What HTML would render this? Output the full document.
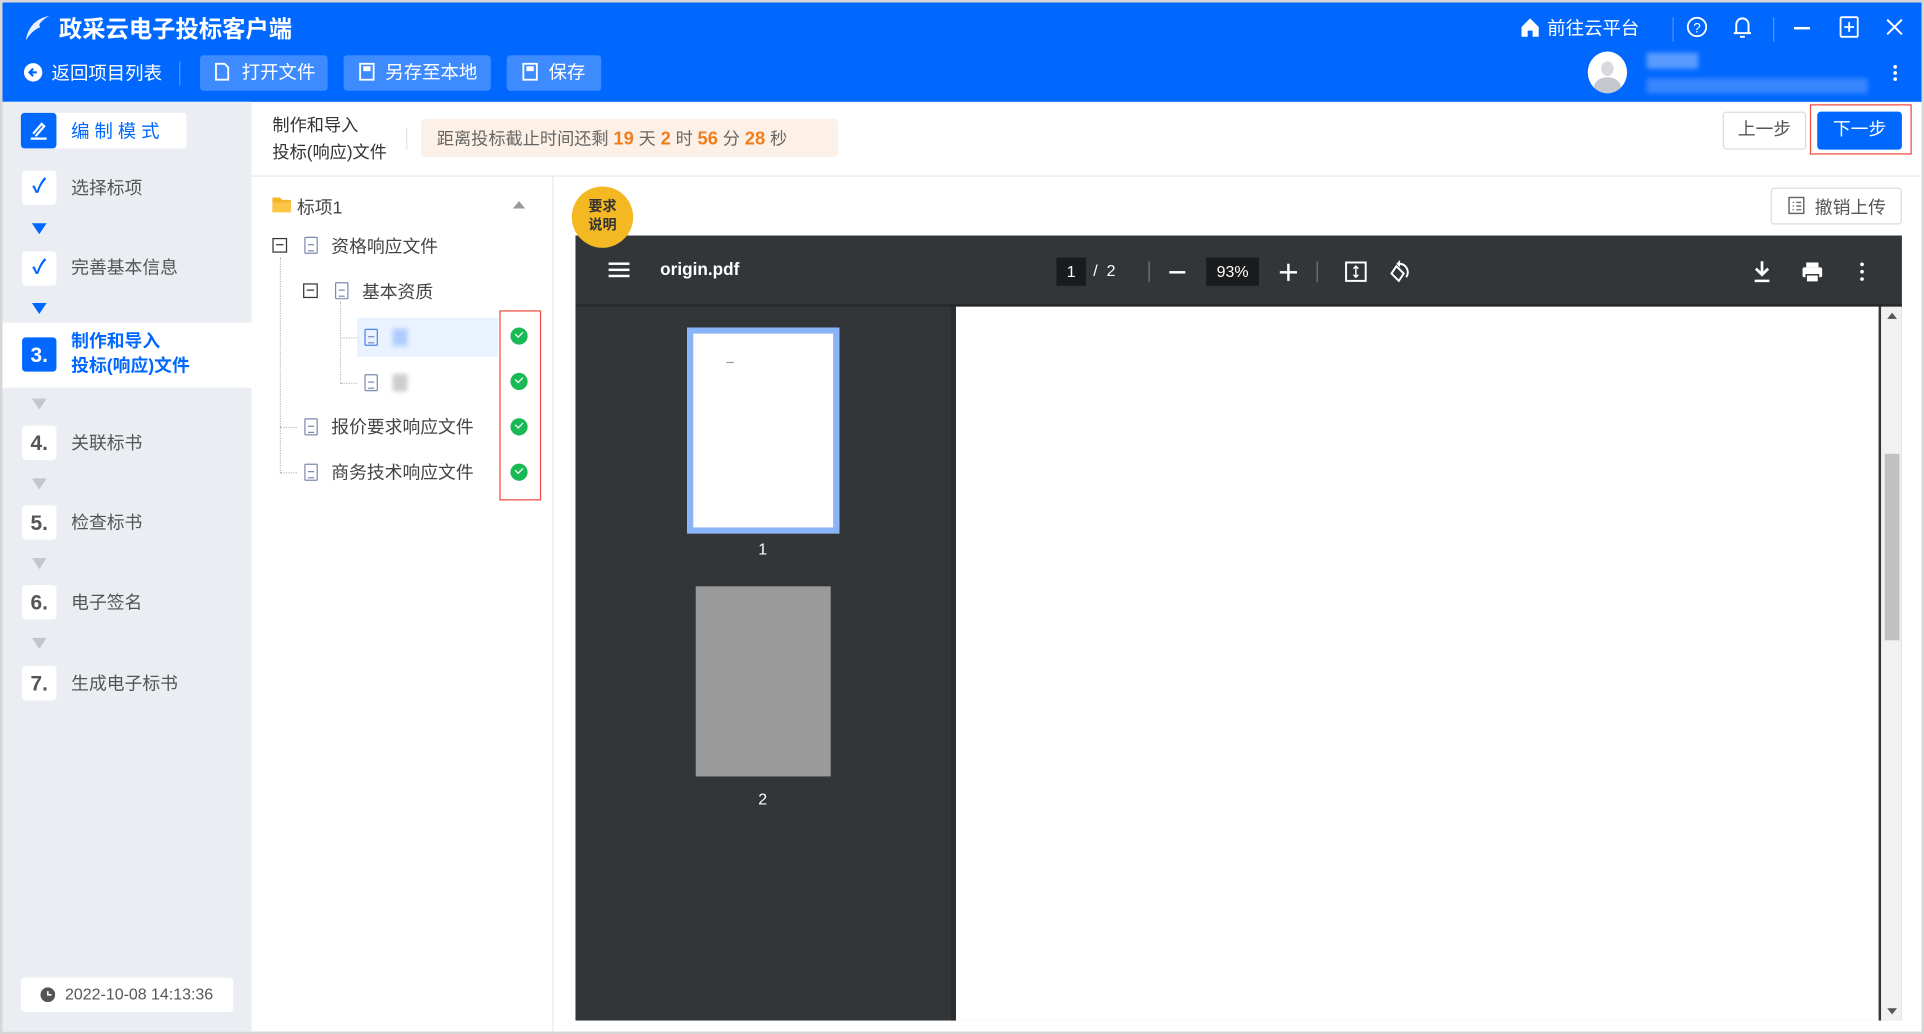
<!DOCTYPE html>
<html><head><meta charset="utf-8"><style>
*{box-sizing:border-box;margin:0;padding:0}
html,body{width:1924px;height:1034px;overflow:hidden;background:#dcdcdc}
#w{position:absolute;left:0;top:0;width:1568px;height:843px;transform:scale(1.22704,1.2266);transform-origin:0 0;font-family:"Liberation Sans","Noto Sans CJK SC",sans-serif;background:#fff;border:2px solid #d6d6d6;overflow:hidden}
.a{position:absolute}
.t{position:absolute;white-space:nowrap}
.btn{position:absolute;top:43px;height:29px;background:#3d8bff;border-radius:3px;color:#fff;font-size:15px;line-height:29px;padding-left:34px}
.sq{position:absolute;left:16px;width:28px;height:28px;background:#fff;border-radius:3px;font-weight:bold;font-size:16px;color:#555;text-align:center;line-height:28px}
.st{position:absolute;left:56px;font-size:14.5px;color:#555}
.arr{position:absolute;left:24px;width:0;height:0;border-left:6px solid transparent;border-right:6px solid transparent;border-top:9px solid #c4c6cc}
.ck{position:absolute;left:414px;width:14px;height:14px;border-radius:50%;background:#19b955}
.ck:after{content:"";position:absolute;left:4px;top:3px;width:5px;height:3px;border-left:1.6px solid #fff;border-bottom:1.6px solid #fff;transform:rotate(-45deg)}
.tr{position:absolute;font-size:14.5px;color:#444}
.doc{position:absolute;width:11px;height:14px;border:1.3px solid #7d8ab0;border-radius:1px}
.doc:after{content:"";position:absolute;left:2px;top:5px;width:5px;height:4px;border-top:1.3px solid #7d8ab0;border-bottom:1.3px solid #7d8ab0}
.mb{position:absolute;width:12px;height:12px;border:1.3px solid #333}
.mb:after{content:"";position:absolute;left:2px;top:4px;width:6px;border-top:1.3px solid #333}
</style></head><body><div id="w">
<div class="a" style="left:0;top:0;width:1566px;height:81px;background:#0068ff"></div>
<svg class="a" style="left:16px;top:10px" width="24" height="24" viewBox="0 0 24 24"><path d="M22 1C12 3 5 9 3 21c3-5 7-9 12-11C12 8 17 4 22 1z" fill="#e8f0ff"/></svg>
<div class="t" style="left:46px;top:7px;color:#fff;font-size:19px;font-weight:bold">政采云电子投标客户端</div>
<svg class="a" style="left:17px;top:49px" width="16" height="16" viewBox="0 0 16 16"><circle cx="8" cy="8" r="7.5" fill="#fff"/><path d="M11 8H5.5M8 5L5 8l3 3" stroke="#0068ff" stroke-width="1.8" fill="none"/></svg>
<div class="t" style="left:40px;top:47px;color:#fff;font-size:15px">返回项目列表</div>
<div class="a" style="left:144px;top:48px;width:1px;height:20px;background:#4d93ff"></div>
<div class="btn" style="left:161px;width:104px">打开文件</div>
<div class="btn" style="left:278px;width:120px">另存至本地</div>
<div class="btn" style="left:411px;width:77px">保存</div>
<svg class="a" style="left:172px;top:49px" width="14" height="16"><path d="M2 1h7l3 3v10H2z" stroke="#fff" stroke-width="1.5" fill="none"/></svg>
<svg class="a" style="left:290px;top:49px" width="14" height="16"><rect x="1.5" y="1" width="11" height="13" stroke="#fff" stroke-width="1.5" fill="none"/><rect x="4" y="3" width="6" height="4" fill="#fff"/></svg>
<svg class="a" style="left:423px;top:49px" width="14" height="16"><rect x="1.5" y="1" width="11" height="13" stroke="#fff" stroke-width="1.5" fill="none"/><rect x="4" y="3" width="6" height="4" fill="#fff"/></svg>
<svg class="a" style="left:1236px;top:11px" width="18" height="18"><path d="M2 9L9 2l7 7v8h-5v-5H7v5H2z" fill="#fff"/></svg>
<div class="t" style="left:1259px;top:10px;color:#fff;font-size:15px">前往云平台</div>
<div class="a" style="left:1361px;top:12px;width:1px;height:20px;background:#4d93ff"></div>
<svg class="a" style="left:1372px;top:11px" width="18" height="18"><circle cx="9" cy="9" r="7.5" stroke="#fff" stroke-width="1.5" fill="none"/><text x="9" y="13.5" font-size="11" fill="#fff" text-anchor="middle" font-family="Liberation Sans">?</text></svg>
<svg class="a" style="left:1410px;top:10px" width="16" height="20"><path d="M3 15V8a5 5 0 0110 0v7zM1 15h14M6 18h4" stroke="#fff" stroke-width="1.6" fill="none"/></svg>
<div class="a" style="left:1443px;top:12px;width:1px;height:20px;background:#4d93ff"></div>
<div class="a" style="left:1460px;top:20px;width:13px;height:1.6px;background:#fff"></div>
<svg class="a" style="left:1497px;top:11px" width="16" height="18"><rect x="1" y="1" width="14" height="16" stroke="#fff" stroke-width="1.5" fill="none" rx="1"/><path d="M8 5v8M4 9h8" stroke="#fff" stroke-width="1.5"/></svg>
<svg class="a" style="left:1534px;top:12px" width="16" height="16"><path d="M2 2l12 12M14 2L2 14" stroke="#fff" stroke-width="1.6"/></svg>
<div class="a" style="left:1292px;top:40px;width:32px;height:34px;border-radius:50%;background:#fff;overflow:hidden"><div class="a" style="left:11px;top:8px;width:10px;height:12px;border-radius:50%;background:#d7d9dd"></div><div class="a" style="left:5px;top:21px;width:22px;height:16px;border-radius:50% 50% 0 0;background:#c5c8ce"></div></div>
<div class="a" style="left:1340px;top:41px;width:42px;height:13px;background:#5a9bff;filter:blur(2px)"></div>
<div class="a" style="left:1340px;top:62px;width:180px;height:12px;background:#3a86ff;filter:blur(2px)"></div>
<div class="a" style="left:1541px;top:51px;width:3px;height:3px;background:#fff;border-radius:50%;box-shadow:0 5px #fff,0 10px #fff"></div>
<div class="a" style="left:0;top:81px;width:203px;height:760px;background:#eaedf2"></div>
<div class="a" style="left:15px;top:90px;width:135px;height:29px;background:#fff;border-radius:3px"></div>
<div class="a" style="left:15px;top:90px;width:29px;height:29px;background:#0068ff;border-radius:3px"></div>
<svg class="a" style="left:21px;top:96px" width="17" height="17"><path d="M4 11L11 3l2 2-7 8M2 15h13" stroke="#fff" stroke-width="1.8" fill="none"/></svg>
<div class="t" style="left:56px;top:94px;color:#0068ff;font-size:15px;letter-spacing:4px">编制模式</div>
<div class="sq" style="top:137px;color:#0068ff">✓</div><div class="st" style="top:140px">选择标项</div>
<div class="arr" style="top:180px;border-top-color:#0068ff"></div>
<div class="sq" style="top:203px;color:#0068ff">✓</div><div class="st" style="top:205px">完善基本信息</div>
<div class="arr" style="top:245px;border-top-color:#0068ff"></div>
<div class="a" style="left:0;top:261px;width:203px;height:53px;background:#fff"></div>
<div class="sq" style="top:273px;background:#0068ff;color:#fff;font-size:17px;line-height:30px">3.</div>
<div class="st" style="top:267px;color:#0068ff;font-weight:bold;line-height:20px">制作和导入<br>投标(响应)文件</div>
<div class="arr" style="top:323px"></div>
<div class="sq" style="top:345px;font-size:17px;line-height:30px">4.</div><div class="st" style="top:348px">关联标书</div>
<div class="arr" style="top:388px"></div>
<div class="sq" style="top:410px;font-size:17px;line-height:30px">5.</div><div class="st" style="top:413px">检查标书</div>
<div class="arr" style="top:453px"></div>
<div class="sq" style="top:475px;font-size:17px;line-height:30px">6.</div><div class="st" style="top:478px">电子签名</div>
<div class="arr" style="top:518px"></div>
<div class="sq" style="top:541px;font-size:17px;line-height:30px">7.</div><div class="st" style="top:544px">生成电子标书</div>
<div class="a" style="left:15px;top:795px;width:173px;height:28px;background:#fff;border-radius:3px"></div>
<svg class="a" style="left:31px;top:803px" width="12" height="12"><circle cx="6" cy="6" r="6" fill="#555"/><path d="M6 3v3h3" stroke="#fff" stroke-width="1.3" fill="none"/></svg>
<div class="t" style="left:51px;top:801px;font-size:13px;color:#555">2022-10-08 14:13:36</div>
<div class="t" style="left:220px;top:89px;font-size:14px;color:#333;line-height:22px">制作和导入<br>投标(响应)文件</div>
<div class="a" style="left:329px;top:102px;width:1px;height:18px;background:#e5e5e5"></div>
<div class="a" style="left:341px;top:95px;width:340px;height:31px;background:#fdf1e7;border-radius:3px"></div>
<div class="t" style="left:354px;top:101px;font-size:14px;color:#666">距离投标截止时间还剩 <b style="color:#f07e1f;font-size:15px">19</b> 天 <b style="color:#f07e1f;font-size:15px">2</b> 时 <b style="color:#f07e1f;font-size:15px">56</b> 分 <b style="color:#f07e1f;font-size:15px">28</b> 秒</div>
<div class="a" style="left:1402px;top:89px;width:68px;height:31px;border:1px solid #dcdcdc;border-radius:3px;font-size:14.5px;color:#555;text-align:center;line-height:29px">上一步</div>
<div class="a" style="left:1479px;top:89px;width:69px;height:31px;background:#0068ff;border-radius:3px;font-size:14.5px;color:#fff;text-align:center;line-height:31px">下一步</div>
<div class="a" style="left:1473px;top:83px;width:83px;height:41px;border:1.5px solid #ef4a3f"></div>
<div class="a" style="left:203px;top:141px;width:1363px;height:1px;background:#e8e8e8"></div>
<div class="a" style="left:448px;top:142px;width:1px;height:699px;background:#e8e8e8"></div>
<svg class="a" style="left:219px;top:157px" width="17" height="15"><path d="M1 2h6l2 2h7v10H1z" fill="#f5b428"/><path d="M1 6h15v8H1z" fill="#fbc545"/></svg>
<div class="tr" style="left:240px;top:156px">标项1</div>
<div class="a" style="left:416px;top:162px;border-left:5px solid transparent;border-right:5px solid transparent;border-bottom:6px solid #999"></div>
<div class="mb" style="left:220px;top:192px"></div><div class="doc" style="left:246px;top:191px"></div><div class="tr" style="left:268px;top:188px">资格响应文件</div>
<div class="a" style="left:226px;top:208px;height:176px;border-left:1px dotted #bbb"></div>
<div class="mb" style="left:245px;top:229px"></div><div class="doc" style="left:271px;top:228px"></div><div class="tr" style="left:293px;top:225px">基本资质</div>
<div class="a" style="left:275px;top:244px;height:64px;border-left:1px dotted #bbb"></div>
<div class="a" style="left:289px;top:257px;width:115px;height:32px;background:#eaf2ff"></div>
<div class="a" style="left:275px;top:273px;width:14px;border-top:1px dotted #bbb"></div>
<div class="a" style="left:275px;top:310px;width:14px;border-top:1px dotted #bbb"></div>
<div class="doc" style="left:295px;top:266px;border-color:#4a86f0"></div><div class="a" style="left:318px;top:266px;width:12px;height:14px;background:#aecbff;filter:blur(2px)"></div>
<div class="doc" style="left:295px;top:303px"></div><div class="a" style="left:318px;top:303px;width:12px;height:14px;background:#ccc;filter:blur(2px)"></div>
<div class="a" style="left:226px;top:346px;width:14px;border-top:1px dotted #bbb"></div>
<div class="a" style="left:226px;top:383px;width:14px;border-top:1px dotted #bbb"></div>
<div class="doc" style="left:246px;top:339px"></div><div class="tr" style="left:268px;top:335px">报价要求响应文件</div>
<div class="doc" style="left:246px;top:376px"></div><div class="tr" style="left:268px;top:372px">商务技术响应文件</div>
<div class="ck" style="top:265px"></div><div class="ck" style="top:302px"></div><div class="ck" style="top:339px"></div><div class="ck" style="top:376px"></div>
<div class="a" style="left:405px;top:251px;width:34px;height:155px;border:1.5px solid #ef4a3f"></div>
<div class="a" style="left:1441px;top:151px;width:107px;height:30px;border:1px solid #dcdcdc;border-radius:3px"></div>
<svg class="a" style="left:1455px;top:158px" width="14" height="15"><rect x="1" y="1" width="12" height="13" stroke="#666" stroke-width="1.2" fill="none"/><path d="M4 5h1M7 5h4M4 8h1M7 8h4M4 11h1M7 11h4" stroke="#666" stroke-width="1.1"/></svg>
<div class="t" style="left:1477px;top:156px;font-size:14.5px;color:#555">撤销上传</div>
<div class="a" style="left:467px;top:190px;width:1081px;height:640px;background:#323639"></div>
<div class="a" style="left:467px;top:246px;width:1081px;height:2px;background:#26292b"></div>
<div class="a" style="left:777px;top:248px;width:752px;height:582px;background:#fff"></div>
<div class="a" style="left:773px;top:248px;width:4px;height:582px;background:#2a2d30"></div>
<div class="a" style="left:1531px;top:248px;width:17px;height:582px;background:#f1f1f1"></div>
<div class="a" style="left:1534px;top:368px;width:12px;height:152px;background:#c1c1c1"></div>
<div class="a" style="left:1536px;top:253px;border-left:4px solid transparent;border-right:4px solid transparent;border-bottom:5px solid #555"></div>
<div class="a" style="left:1536px;top:820px;border-left:4px solid transparent;border-right:4px solid transparent;border-top:5px solid #555"></div>
<div class="a" style="left:464px;top:150px;width:50px;height:50px;border-radius:50%;background:#f4b823;color:#333;font-size:11.5px;text-align:center;line-height:15px;padding-top:10px;font-weight:bold">要求<br>说明</div>
<div class="a" style="left:494px;top:212px;width:17px;height:2px;background:#fff;box-shadow:0 5px #fff,0 10px #fff"></div>
<div class="t" style="left:536px;top:209px;color:#fff;font-size:14px;font-weight:bold">origin.pdf</div>
<div class="a" style="left:859px;top:208px;width:24px;height:23px;background:#191b1c;color:#fff;font-size:13px;text-align:center;line-height:23px">1</div>
<div class="t" style="left:889px;top:211px;color:#fff;font-size:13px">/ &nbsp;2</div>
<div class="a" style="left:934px;top:211px;width:1px;height:17px;background:#777"></div>
<div class="a" style="left:951px;top:219px;width:13px;height:2px;background:#fff"></div>
<div class="a" style="left:981px;top:208px;width:43px;height:23px;background:#191b1c;color:#fff;font-size:13px;text-align:center;line-height:23px">93%</div>
<div class="a" style="left:1041px;top:219px;width:14px;height:2px;background:#fff"></div>
<div class="a" style="left:1047px;top:213px;width:2px;height:14px;background:#fff"></div>
<div class="a" style="left:1071px;top:211px;width:1px;height:17px;background:#777"></div>
<svg class="a" style="left:1093px;top:210px" width="20" height="20"><rect x="2" y="2" width="16" height="15" stroke="#fff" stroke-width="1.6" fill="none"/><path d="M10 5v9M8 7l2-2 2 2M8 12l2 2 2-2" stroke="#fff" stroke-width="1.2" fill="none"/></svg>
<svg class="a" style="left:1130px;top:209px" width="20" height="22"><path d="M6 6l-4 6 6 6 4-6z" stroke="#fff" stroke-width="1.6" fill="none"/><path d="M9 4a7 7 0 015 11" stroke="#fff" stroke-width="1.6" fill="none"/><path d="M9 1v6l-3-3z" fill="#fff"/></svg>
<svg class="a" style="left:1425px;top:210px" width="18" height="20"><path d="M9 1v11M4 7l5 5 5-5" stroke="#fff" stroke-width="2.2" fill="none"/><path d="M3 17h12" stroke="#fff" stroke-width="2"/></svg>
<svg class="a" style="left:1465px;top:210px" width="20" height="20"><rect x="5" y="2" width="10" height="4" fill="#fff"/><rect x="2" y="6" width="16" height="8" rx="1.5" fill="#fff"/><rect x="5" y="12" width="10" height="6" fill="#fff" stroke="#323639" stroke-width="1.2"/></svg>
<div class="a" style="left:1514px;top:212px;width:3px;height:3px;background:#fff;border-radius:50%;box-shadow:0 6px #fff,0 12px #fff"></div>
<div class="a" style="left:558px;top:265px;width:124px;height:168px;background:#fff;border:5px solid #8ab4f8"></div>
<div class="a" style="left:590px;top:293px;width:6px;height:1px;background:#999"></div>
<div class="t" style="left:616px;top:438px;color:#fff;font-size:13px">1</div>
<div class="a" style="left:565px;top:476px;width:110px;height:155px;background:#9a9a9a"></div>
<div class="t" style="left:616px;top:642px;color:#fff;font-size:13px">2</div>
</div></body></html>
